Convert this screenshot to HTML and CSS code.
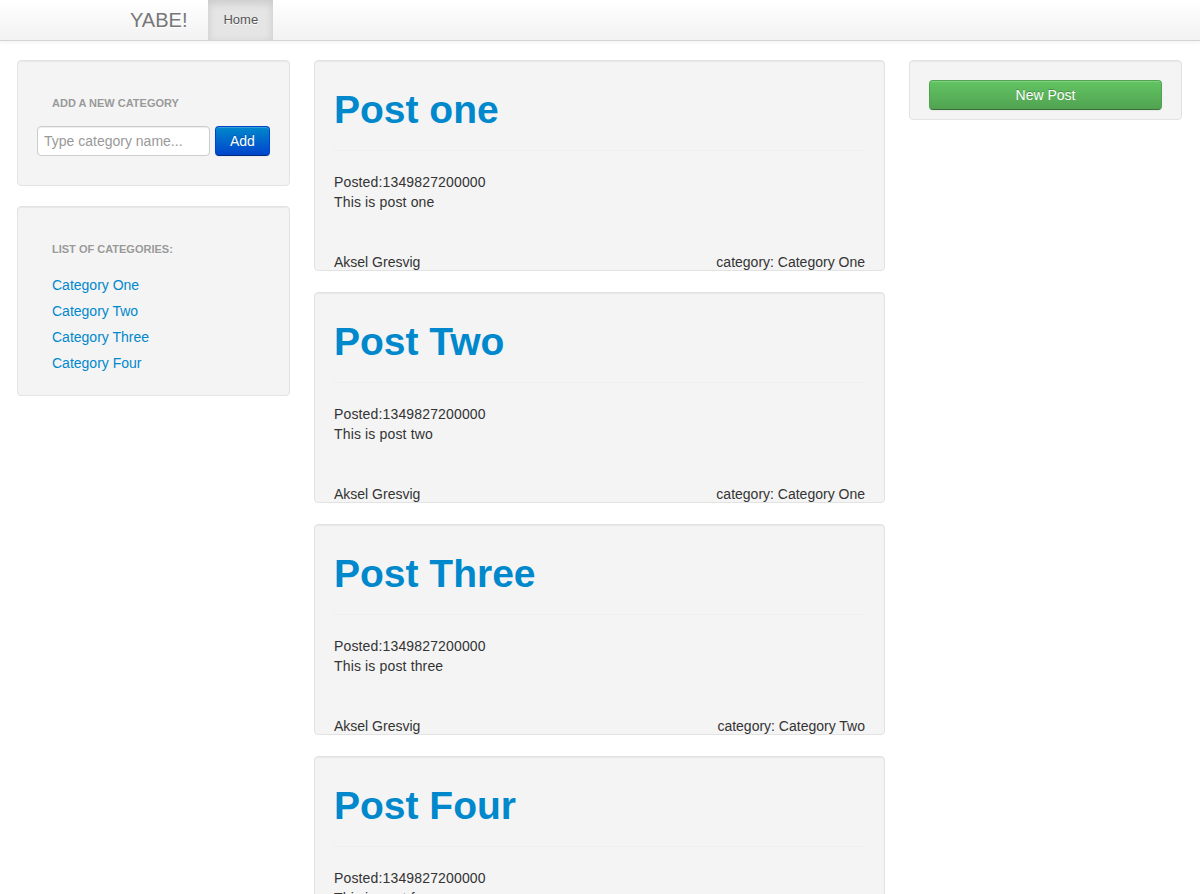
FILE: index.html
```html
<!DOCTYPE html>
<html lang="en">
<head>
<meta charset="utf-8">
<title>YABE!</title>
<link rel="stylesheet" href="styles.css">
</head>
<body>
<header class="navbar">
  <div class="navbar-inner">
    <a class="brand" href="#">YABE!</a>
    <ul class="nav">
      <li class="active"><a href="#">Home</a></li>
    </ul>
  </div>
</header>

<main class="layout">
  <aside class="sidebar">
    <div class="well">
      <div class="nav-header">Add a new category</div>
      <form class="add-form">
        <input class="input" type="text" placeholder="Type category name...">
        <button class="btn btn-primary" type="button">Add</button>
      </form>
    </div>
    <div class="well">
      <div class="nav-header">List of categories:</div>
      <ul class="nav-list">
        <li><a href="#">Category One</a></li>
        <li><a href="#">Category Two</a></li>
        <li><a href="#">Category Three</a></li>
        <li><a href="#">Category Four</a></li>
      </ul>
    </div>
  </aside>

  <section class="posts">
    <article class="well post">
      <div class="page-header"><h1><a href="#">Post one</a></h1></div>
      <p class="post-body">Posted:1349827200000<br>This is post one</p>
      <div class="post-footer"><span>Aksel Gresvig</span><span>category: Category One</span></div>
    </article>
    <article class="well post">
      <div class="page-header"><h1><a href="#">Post Two</a></h1></div>
      <p class="post-body">Posted:1349827200000<br>This is post two</p>
      <div class="post-footer"><span>Aksel Gresvig</span><span>category: Category One</span></div>
    </article>
    <article class="well post">
      <div class="page-header"><h1><a href="#">Post Three</a></h1></div>
      <p class="post-body">Posted:1349827200000<br>This is post three</p>
      <div class="post-footer"><span>Aksel Gresvig</span><span>category: Category Two</span></div>
    </article>
    <article class="well post">
      <div class="page-header"><h1><a href="#">Post Four</a></h1></div>
      <p class="post-body">Posted:1349827200000<br>This is post four</p>
      <div class="post-footer"><span>Aksel Gresvig</span><span>category: Category Two</span></div>
    </article>
  </section>

  <aside class="sidebar">
    <div class="well well-action">
      <button class="btn btn-success btn-block" type="button">New Post</button>
    </div>
  </aside>
</main>
</body>
</html>
```

FILE: styles.css
```css
* { box-sizing: border-box; }

html, body {
  margin: 0;
  padding: 0;
}

body {
  font-family: "Liberation Sans", Arial, Helvetica, sans-serif;
  font-size: 14px;
  line-height: 20px;
  color: #333;
  background: #fff;
}

a {
  color: #0088cc;
  text-decoration: none;
}

/* Navbar */
.navbar {
  height: 41px;
  background: linear-gradient(to bottom, #ffffff, #f2f2f2);
  border-bottom: 1px solid #d4d4d4;
  box-shadow: 0 1px 4px rgba(0, 0, 0, 0.065);
}

.navbar-inner {
  width: 940px;
  margin: 0 auto;
  display: flex;
  height: 40px;
}

.brand {
  display: block;
  margin-left: -20px;
  padding: 10px 20px;
  font-size: 20px;
  line-height: 20px;
  color: #777;
  text-shadow: 0 1px 0 #fff;
}

.nav {
  list-style: none;
  margin: 0 0 0 1px;
  padding: 0;
  display: flex;
}

.nav li a {
  display: block;
  padding: 10px 15px;
  font-size: 13px;
  line-height: 20px;
  color: #555;
  text-shadow: 0 1px 0 #fff;
}

.nav li.active a {
  background: #e5e5e5;
  box-shadow: inset 0 3px 8px rgba(0, 0, 0, 0.125);
}

/* Layout */
.layout {
  display: grid;
  grid-template-columns: 273px 571px 273px;
  column-gap: 24px;
  padding: 19px 0 0 17px;
  align-items: start;
}

.well {
  background: #f4f4f4;
  border: 1px solid #e3e3e3;
  border-radius: 4px;
  box-shadow: inset 0 1px 1px rgba(0, 0, 0, 0.05);
  padding: 19px;
  margin-bottom: 20px;
}

.nav-header {
  margin-top: 10px;
  padding: 3px 15px;
  font-size: 11px;
  font-weight: bold;
  line-height: 20px;
  color: #999;
  text-transform: uppercase;
  text-shadow: 0 1px 0 rgba(255, 255, 255, 0.5);
}

.add-form {
  display: flex;
  gap: 5px;
  margin: 10px 0 10px;
}

.input {
  width: 173px;
  height: 30px;
  padding: 4px 6px;
  font-family: inherit;
  font-size: 14px;
  line-height: 20px;
  color: #555;
  background: #fff;
  border: 1px solid #ccc;
  border-radius: 4px;
  box-shadow: inset 0 1px 1px rgba(0, 0, 0, 0.075);
}

.input::placeholder {
  color: #999;
}

.btn {
  height: 30px;
  padding: 0 14px;
  font-family: inherit;
  font-size: 14px;
  line-height: 20px;
  color: #fff;
  border-radius: 4px;
  cursor: pointer;
  text-shadow: 0 -1px 0 rgba(0, 0, 0, 0.25);
}

.btn-primary {
  background: linear-gradient(to bottom, #0088cc, #0044cc);
  border: 1px solid #0044cc;
  border-bottom-color: #002a80;
  box-shadow: inset 0 1px 0 rgba(255, 255, 255, 0.2), 0 1px 2px rgba(0, 0, 0, 0.05);
}

.btn-success {
  background: linear-gradient(to bottom, #62c462, #51a351);
  border: 1px solid #51a351;
  border-bottom-color: #387038;
  box-shadow: inset 0 1px 0 rgba(255, 255, 255, 0.2), 0 1px 2px rgba(0, 0, 0, 0.05);
}

.btn-block {
  display: block;
  width: 100%;
}

.nav-list {
  list-style: none;
  margin: 10px 0 0;
  padding: 0;
}

.nav-list li a {
  display: block;
  padding: 3px 15px;
  line-height: 20px;
}

.well-action {
  height: 60px;
}

/* Posts */
.post {
  height: 211px;
  padding-bottom: 0;
  margin-bottom: 21px;
}

.page-header {
  padding-bottom: 9px;
  border-bottom: 1px solid #eee;
}

.page-header h1 {
  margin: 10px 0 11px;
  font-size: 39px;
  line-height: 40px;
  font-weight: bold;
}

.post-body {
  margin: 21px 0 0;
  letter-spacing: 0.15px;
}

.post-footer {
  display: flex;
  justify-content: space-between;
  margin-top: 40px;
  height: 20px;
}
```
